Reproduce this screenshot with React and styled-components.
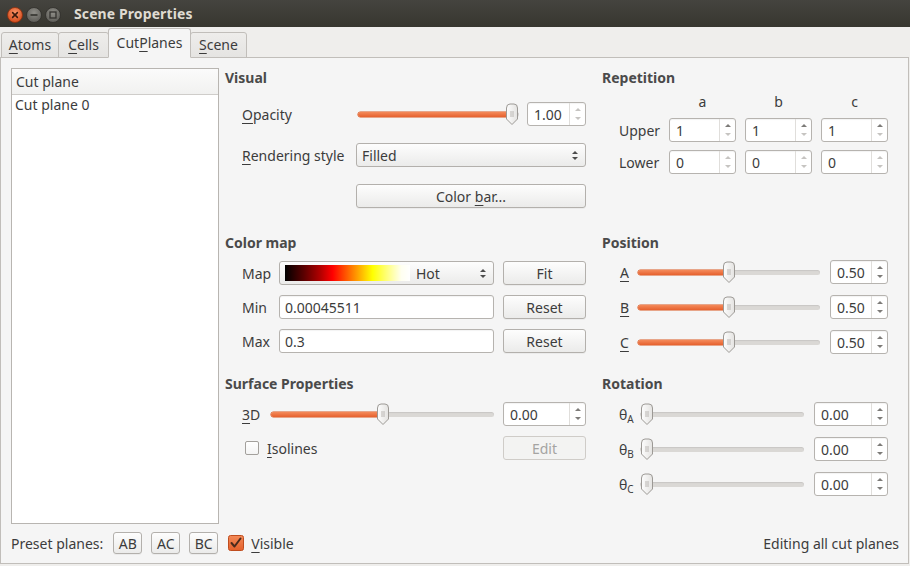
import React from 'react';
import styled, { createGlobalStyle } from 'styled-components';

const Global = createGlobalStyle`
  html, body { margin: 0; padding: 0; background: #efeeec; }
  body {
    font-family: "Noto Sans", "Open Sans", sans-serif;
    font-size: 14px;
    color: #3c3c3c;
  }
  * { box-sizing: border-box; }
`;

const Window = styled.div`
  width: 910px;
  height: 566px;
  display: flex;
  flex-direction: column;
  background: #efeeec;
  overflow: hidden;
`;

const TitleBar = styled.div`
  height: 27px;
  flex: none;
  display: flex;
  align-items: center;
  background: linear-gradient(#45443f, #37362f);
  padding-left: 7px;
`;

const WinButtons = styled.div`
  display: flex;
  gap: 3px;
  align-items: center;
  margin-top: 2px;
`;

const Title = styled.div`
  margin-left: 13px;
  font-weight: bold;
  font-size: 14px;
  color: #dfdbd2;
  letter-spacing: 0.1px;
`;

const TabBar = styled.div`
  height: 31px;
  flex: none;
  display: flex;
  align-items: flex-end;
  padding-left: 1px;
  position: relative;
  z-index: 1;
  margin-bottom: -1px;
`;

const Tab = styled.div`
  height: ${p => (p.$active ? 30 : 26)}px;
  width: ${p => p.$w}px;
  margin-left: ${p => (p.$first ? 0 : -1)}px;
  display: flex;
  align-items: center;
  justify-content: center;
  border: 1px solid #c1beba;
  border-bottom-color: ${p => (p.$active ? '#f5f5f5' : '#c1beba')};
  border-radius: 3px 3px 0 0;
  background: ${p => (p.$active ? '#f5f5f5' : 'linear-gradient(#eeedeb, #e5e4e2)')};
  position: relative;
  z-index: ${p => (p.$active ? 2 : 1)};
  padding-bottom: ${p => (p.$active ? 2 : 1)}px;
`;

const Pane = styled.div`
  flex: 1;
  margin: 0 1px 2px 0;
  border: 1px solid #c1beba;
  background: #f5f5f5;
  padding: 10px 20px 8px 10px;
  display: flex;
  flex-direction: column;
`;

const Main = styled.div`
  height: 456px;
  display: grid;
  grid-template-columns: 208px 1fr 286px;
  grid-template-rows: 165px 141px 1fr;
  column-gap: 6px;
`;

const ListBox = styled.div`
  grid-row: 1 / span 3;
  grid-column: 1;
  background: #fff;
  border: 1px solid #b8b5b1;
  display: flex;
  flex-direction: column;
`;

const ListHeader = styled.div`
  height: 26px;
  flex: none;
  display: flex;
  align-items: center;
  padding-left: 4px;
  background: linear-gradient(#fbfbfb, #f1f1f0);
  border-bottom: 1px solid #cfcdca;
`;

const ListItem = styled.div`
  height: 18px;
  display: flex;
  align-items: center;
  padding-left: 3px;
  margin-top: 0;
`;

const Section = styled.div`
  grid-column: ${p => p.$col};
  grid-row: ${p => p.$row};
  display: flex;
  flex-direction: column;
  padding-right: ${p => p.$pr || 0}px;
`;

const Heading = styled.div`
  height: 20px;
  line-height: 20px;
  font-weight: bold;
  color: #4a4a4a;
`;

const Rows = styled.div`
  margin-top: ${p => p.$mt}px;
  display: flex;
  flex-direction: column;
  gap: ${p => p.$gap}px;
  padding-left: ${p => p.$pl || 17}px;
`;

const Row = styled.div`
  height: 24px;
  display: flex;
  align-items: center;
`;

const Label = styled.div`
  width: ${p => p.$w}px;
  flex: none;
  white-space: nowrap;
`;

const Mn = styled.span`
  text-decoration: underline;
  text-underline-offset: 3px;
  text-decoration-thickness: 1px;
`;

const Sub = styled.sub`
  font-size: 10px;
  vertical-align: -3px;
  line-height: 0;
`;

const SliderBox = styled.div`
  position: relative;
  height: 24px;
  width: ${p => p.$w}px;
  flex: none;
`;

const Groove = styled.div`
  position: absolute;
  left: 0;
  right: 0;
  top: 10px;
  height: 5px;
  border-radius: 3px;
  background: #dad8d5;
  box-shadow: inset 0 1px 1px rgba(0, 0, 0, 0.08);
`;

const Fill = styled.div`
  position: absolute;
  left: 0;
  top: 10px;
  height: 5px;
  border-radius: 3px;
  background: linear-gradient(#f48a5a, #e6612e);
  box-shadow: 0 0 0 0.5px #d9561f;
`;

const HandleSvg = styled.svg`
  position: absolute;
  top: 1px;
`;

const SpinBox = styled.div`
  height: 24px;
  width: ${p => p.$w}px;
  flex: none;
  margin-left: ${p => (p.$auto ? 'auto' : '0')};
  display: flex;
  border: 1px solid #b6b3af;
  border-radius: 3px;
  background: #fff;
  box-shadow: inset 0 1px 1px rgba(0, 0, 0, 0.05);
`;

const SpinText = styled.div`
  flex: 1;
  display: flex;
  align-items: center;
  padding-left: 6px;
`;

const SpinArrows = styled.div`
  width: 16px;
  flex: none;
  border-left: 1px solid #e0dedb;
  display: flex;
  flex-direction: column;
  align-items: center;
  justify-content: center;
  gap: 6px;
`;

const Arrow = styled.div`
  width: 0;
  height: 0;
  border-left: 3px solid transparent;
  border-right: 3px solid transparent;
  ${p => (p.$up ? 'border-bottom' : 'border-top')}: 3px solid ${p => p.$c};
`;

const Button = styled.div`
  height: ${p => p.$h || 24}px;
  width: ${p => (p.$w ? `${p.$w}px` : 'auto')};
  flex: ${p => (p.$w ? 'none' : '1')};
  margin-left: ${p => (p.$auto ? 'auto' : `${p.$ml || 0}px`)};
  display: flex;
  align-items: center;
  justify-content: center;
  border: 1px solid ${p => (p.$disabled ? '#cfccc8' : '#b3b0ac')};
  border-radius: 3px;
  background: ${p => (p.$disabled ? '#f3f3f2' : 'linear-gradient(#fdfdfd, #ebebea)')};
  color: ${p => (p.$disabled ? '#a5a4a2' : '#3c3c3c')};
  box-shadow: ${p => (p.$disabled ? 'none' : '0 1px 0 rgba(0,0,0,0.04)')};
`;

const Combo = styled.div`
  height: 24px;
  width: ${p => (p.$w ? `${p.$w}px` : 'auto')};
  flex: ${p => (p.$w ? 'none' : '1')};
  display: flex;
  align-items: center;
  padding: 0 6px 0 5px;
  border: 1px solid #b3b0ac;
  border-radius: 3px;
  background: linear-gradient(#fdfdfd, #ebebea);
`;

const ComboText = styled.div`
  flex: 1;
`;

const ComboArrows = styled.div`
  display: flex;
  flex-direction: column;
  gap: 3px;
  margin-right: 1px;
`;

const HotBar = styled.div`
  width: 125px;
  height: 16px;
  margin-right: 6px;
  background: linear-gradient(to right, #000 0%, #5a0000 15%, #b00000 28%, #ff0000 38%, #ff6000 50%, #ffb000 60%, #ffff00 70%, #ffff80 82%, #fffff0 93%, #fff 100%);
`;

const LineEdit = styled.div`
  height: 24px;
  width: ${p => p.$w}px;
  flex: none;
  display: flex;
  align-items: center;
  padding-left: 5px;
  border: 1px solid #b6b3af;
  border-radius: 3px;
  background: #fff;
  box-shadow: inset 0 1px 1px rgba(0, 0, 0, 0.05);
`;

const Check = styled.div`
  width: 14px;
  height: 14px;
  flex: none;
  border: 1px solid #a3a09c;
  border-radius: 2px;
  background: linear-gradient(#fff, #f4f4f4);
  margin: 0 8px 0 3px;
`;

const RepGrid = styled.div`
  margin-top: 4px;
  padding-left: 17px;
  display: grid;
  grid-template-columns: 41px 67px 67px 67px;
  grid-template-rows: 18px 24px 24px;
  column-gap: 9px;
  row-gap: 8px;
  align-items: center;
`;

const ColHead = styled.div`
  text-align: center;
`;

const Footer = styled.div`
  margin-top: 8px;
  height: 22px;
  display: flex;
  align-items: center;
  margin-right: -11px;
`;

const FooterRight = styled.div`
  margin-left: auto;
`;

const SmallBtns = styled.div`
  display: flex;
  gap: 9px;
  margin-left: 10px;
`;

const VisibleWrap = styled.div`
  display: flex;
  align-items: center;
  gap: 7px;
  margin-left: 10px;
`;

function WinButton({ kind }) {
  const close = kind === 'close';
  const id = `g-${kind}`;
  return (
    <svg width="16" height="16" viewBox="0 0 16 16">
      <defs>
        <radialGradient id={id} cx="50%" cy="35%" r="65%">
          <stop offset="0%" stopColor={close ? '#f99468' : '#8f8e88'} />
          <stop offset="100%" stopColor={close ? '#d44a1a' : '#5c5b56'} />
        </radialGradient>
      </defs>
      <circle cx="8" cy="8" r="7.5" fill={`url(#${id})`} stroke={close ? '#8a2f0e' : '#2e2d29'} strokeWidth="0.8" />
      {close && (
        <path d="M5.6 5.6 L10.4 10.4 M10.4 5.6 L5.6 10.4" stroke="#3b1a0c" strokeWidth="1.5" strokeLinecap="round" />
      )}
      {kind === 'min' && <path d="M4.5 8 H11.5" stroke="#33322e" strokeWidth="1.6" />}
      {kind === 'max' && <rect x="5" y="5" width="6" height="6" fill="none" stroke="#33322e" strokeWidth="1.3" />}
    </svg>
  );
}

function Handle({ left }) {
  return (
    <HandleSvg width="14" height="23" viewBox="0 0 14 23" style={{ left }}>
      <defs>
        <linearGradient id="hg" x1="0" y1="0" x2="1" y2="0">
          <stop offset="0" stopColor="#fdfdfd" />
          <stop offset="1" stopColor="#e4e3e1" />
        </linearGradient>
      </defs>
      <path d="M1.5 5 Q1.5 1 5 1 H9 Q12.5 1 12.5 5 V16 L7 21.5 L1.5 16 Z" fill="url(#hg)" stroke="#9c9995" strokeWidth="1" />
      <path d="M5 9 H9 M5 11 H9 M5 13 H9" stroke="#b3b0ac" strokeWidth="0.9" />
    </HandleSvg>
  );
}

function Slider({ w, value }) {
  const left = Math.round(value * (w - 14));
  return (
    <SliderBox $w={w}>
      <Groove />
      {value > 0 && <Fill style={{ width: left + 7 }} />}
      <Handle left={left} />
    </SliderBox>
  );
}

function Spin({ w, value, auto, upC = '#7d7b78', downC = '#7d7b78' }) {
  return (
    <SpinBox $w={w} $auto={auto}>
      <SpinText>{value}</SpinText>
      <SpinArrows>
        <Arrow $up $c={upC} />
        <Arrow $c={downC} />
      </SpinArrows>
    </SpinBox>
  );
}

function ComboArrowIcon() {
  return (
    <ComboArrows>
      <Arrow $up $c="#4c4c4c" />
      <Arrow $c="#4c4c4c" />
    </ComboArrows>
  );
}

function CheckedBox() {
  return (
    <svg width="16" height="16" viewBox="0 0 16 16">
      <defs>
        <linearGradient id="cb" x1="0" y1="0" x2="0" y2="1">
          <stop offset="0" stopColor="#f38a58" />
          <stop offset="1" stopColor="#e4602b" />
        </linearGradient>
      </defs>
      <rect x="0.5" y="0.5" width="15" height="15" rx="2" fill="url(#cb)" stroke="#bf4d1f" />
      <path d="M3.5 8 L6.5 11.5 L12.5 3.5" fill="none" stroke="#4a2a1c" strokeWidth="2" strokeLinecap="round" strokeLinejoin="round" />
    </svg>
  );
}

export default function App() {
  return (
    <>
      <Global />
      <Window>
        <TitleBar>
          <WinButtons>
            <WinButton kind="close" />
            <WinButton kind="min" />
            <WinButton kind="max" />
          </WinButtons>
          <Title>Scene Properties</Title>
        </TitleBar>
        <TabBar>
          <Tab $first $w={58}><span><Mn>A</Mn>toms</span></Tab>
          <Tab $w={51}><span><Mn>C</Mn>ells</span></Tab>
          <Tab $active $w={83}><span>Cut<Mn>P</Mn>lanes</span></Tab>
          <Tab $w={57}><span><Mn>S</Mn>cene</span></Tab>
        </TabBar>
        <Pane>
          <Main>
            <ListBox>
              <ListHeader>Cut plane</ListHeader>
              <ListItem>Cut plane 0</ListItem>
            </ListBox>

            <Section $col={2} $row={1} $pr={10}>
              <Heading>Visual</Heading>
              <Rows $mt={14} $gap={17}>
                <Row>
                  <Label $w={116}><Mn>O</Mn>pacity</Label>
                  <Slider w={161} value={1} />
                  <Spin w={59} value="1.00" auto upC="#c6c4c1" downC="#c6c4c1" />
                </Row>
                <Row>
                  <Label $w={114}><Mn>R</Mn>endering style</Label>
                  <Combo>
                    <ComboText>Filled</ComboText>
                    <ComboArrowIcon />
                  </Combo>
                </Row>
                <Row>
                  <Label $w={114} />
                  <Button>
                    <span>Color <Mn>b</Mn>ar...</span>
                  </Button>
                </Row>
              </Rows>
            </Section>

            <Section $col={2} $row={2} $pr={10}>
              <Heading>Color map</Heading>
              <Rows $mt={8} $gap={10}>
                <Row>
                  <Label $w={37}>Map</Label>
                  <Combo $w={215}>
                    <HotBar />
                    <ComboText>Hot</ComboText>
                    <ComboArrowIcon />
                  </Combo>
                  <Button $w={83} $auto>Fit</Button>
                </Row>
                <Row>
                  <Label $w={37}>Min</Label>
                  <LineEdit $w={215}>0.00045511</LineEdit>
                  <Button $w={83} $auto>Reset</Button>
                </Row>
                <Row>
                  <Label $w={37}>Max</Label>
                  <LineEdit $w={215}>0.3</LineEdit>
                  <Button $w={83} $auto>Reset</Button>
                </Row>
              </Rows>
            </Section>

            <Section $col={2} $row={3} $pr={10}>
              <Heading>Surface Properties</Heading>
              <Rows $mt={8} $gap={10}>
                <Row>
                  <Label $w={29}><Mn>3</Mn>D</Label>
                  <Slider w={223} value={0.5} />
                  <Spin w={83} value="0.00" auto />
                </Row>
                <Row>
                  <Check />
                  <Label><Mn>I</Mn>solines</Label>
                  <Button $w={83} $auto $disabled>Edit</Button>
                </Row>
              </Rows>
            </Section>

            <Section $col={3} $row={1}>
              <Heading>Repetition</Heading>
              <RepGrid>
                <div />
                <ColHead>a</ColHead>
                <ColHead>b</ColHead>
                <ColHead>c</ColHead>
                <Label>Upper</Label>
                <Spin w={67} value="1" downC="#c6c4c1" />
                <Spin w={67} value="1" downC="#c6c4c1" />
                <Spin w={67} value="1" downC="#c6c4c1" />
                <Label>Lower</Label>
                <Spin w={67} value="0" upC="#c6c4c1" downC="#c6c4c1" />
                <Spin w={67} value="0" upC="#c6c4c1" downC="#c6c4c1" />
                <Spin w={67} value="0" upC="#c6c4c1" downC="#c6c4c1" />
              </RepGrid>
            </Section>

            <Section $col={3} $row={2}>
              <Heading>Position</Heading>
              <Rows $mt={7} $gap={11} $pl={18}>
                {['A', 'B', 'C'].map(k => (
                  <Row key={k}>
                    <Label $w={18}><Mn>{k}</Mn></Label>
                    <Slider w={182} value={0.5} />
                    <Spin w={58} value="0.50" auto />
                  </Row>
                ))}
              </Rows>
            </Section>

            <Section $col={3} $row={3}>
              <Heading>Rotation</Heading>
              <Rows $mt={8} $gap={11}>
                {['A', 'B', 'C'].map(k => (
                  <Row key={k}>
                    <Label $w={21}>θ<Sub>{k}</Sub></Label>
                    <Slider w={164} value={0} />
                    <Spin w={74} value="0.00" auto />
                  </Row>
                ))}
              </Rows>
            </Section>
          </Main>

          <Footer>
            <span>Preset planes:</span>
            <SmallBtns>
              <Button $w={29} $h={22}>AB</Button>
              <Button $w={29} $h={22}>AC</Button>
              <Button $w={29} $h={22}>BC</Button>
            </SmallBtns>
            <VisibleWrap>
              <CheckedBox />
              <span><Mn>V</Mn>isible</span>
            </VisibleWrap>
            <FooterRight>Editing all cut planes</FooterRight>
          </Footer>
        </Pane>
      </Window>
    </>
  );
}
